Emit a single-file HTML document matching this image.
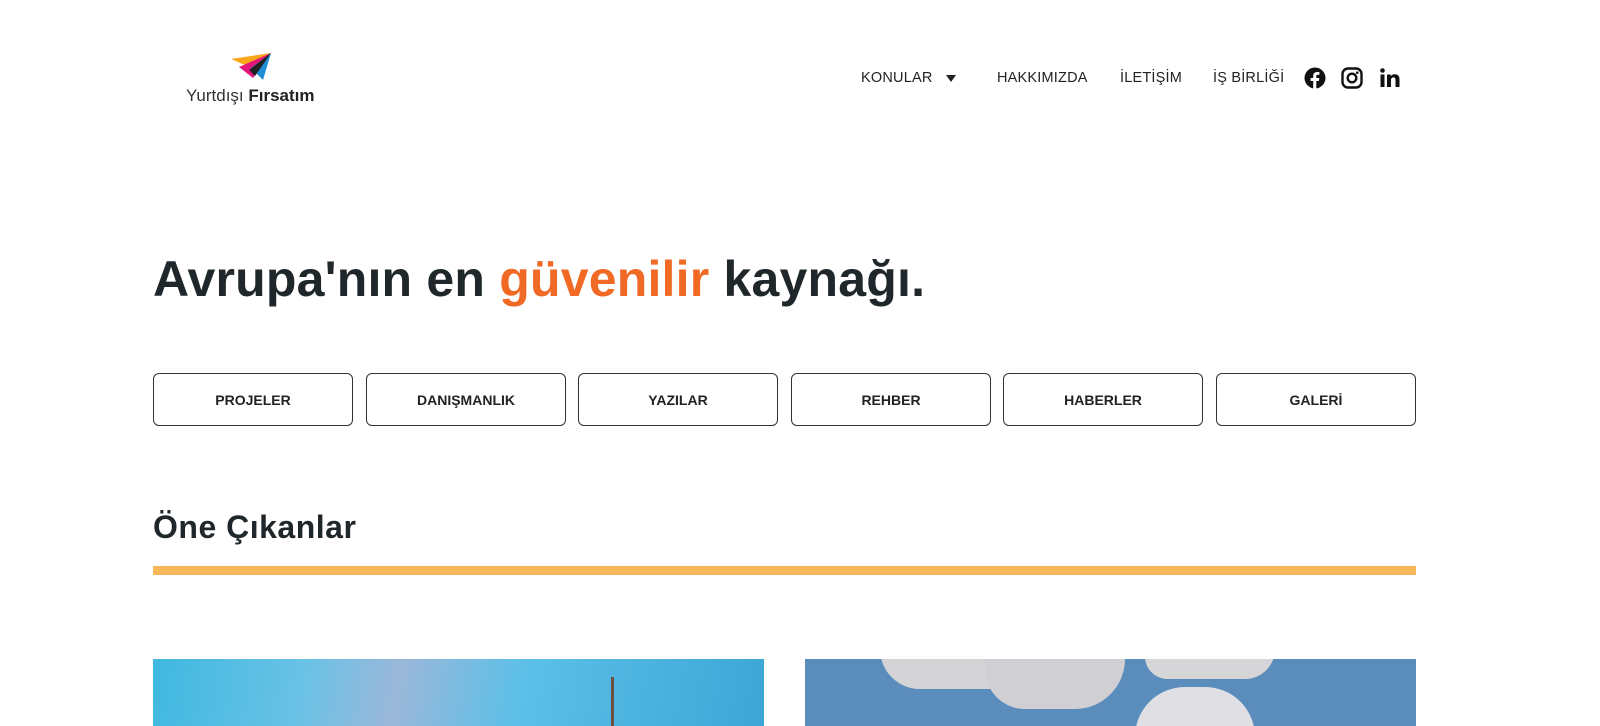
<!DOCTYPE html>
<html><head><meta charset="utf-8">
<style>
*{margin:0;padding:0;box-sizing:border-box}
body{width:1600px;height:726px;overflow:hidden;background:#fff;font-family:"Liberation Sans",sans-serif;color:#212529;position:relative}
.nav{position:absolute;top:70px;font-size:14.5px;color:#222;letter-spacing:0.2px}
h1{position:absolute;left:153px;top:250px;font-size:50px;font-weight:700;letter-spacing:0.2px;color:#1f272b}
h1 span{color:#f06a25}
.btn{position:absolute;top:373px;width:200px;height:53px;border:1px solid #333;border-radius:6px;display:flex;align-items:center;justify-content:center;font-size:14px;font-weight:700;color:#222}
h2{position:absolute;left:153px;top:509px;font-size:32px;font-weight:700;color:#1f272b;letter-spacing:0.5px}
.bar{position:absolute;left:153px;top:566px;width:1263px;height:9px;background:#f6b65a}
.img{position:absolute;top:659px;height:67px;width:611px;overflow:hidden}
</style></head><body>
<svg style="position:absolute;left:185px;top:50px" width="145" height="56" viewBox="0 0 145 56">
<polygon points="46,9 86,3 62,16" fill="#f9a61a"/>
<polygon points="54,17 86,3 68,28" fill="#e5157a"/>
<polygon points="66,18 86,3 78,30" fill="#1f8fd6"/>
<polygon points="64,20 86,3 70,26" fill="#222"/>
<text x="1" y="51" font-family="Liberation Sans" font-size="17" fill="#333">Yurtdışı <tspan font-weight="700" fill="#222">Fırsatım</tspan></text>
</svg>
<div class="nav" style="left:861px">KONULAR</div>
<div style="position:absolute;left:946px;top:75px;width:0;height:0;border-left:5px solid transparent;border-right:5px solid transparent;border-top:7px solid #222"></div>
<div class="nav" style="left:997px">HAKKIMIZDA</div>
<div class="nav" style="left:1120px">İLETİŞİM</div>
<div class="nav" style="left:1213px">İŞ BİRLİĞİ</div>
<svg style="position:absolute;left:1304px;top:67px" width="22" height="22" viewBox="0 0 22 22"><circle cx="11" cy="11" r="10.5" fill="#111"/><path d="M12.3 22V14h2.6l.4-3h-3V9.2c0-.9.3-1.5 1.5-1.5h1.6V5.1c-.3 0-1.2-.1-2.3-.1-2.3 0-3.900 1.4-3.900 4V11H6.6v3h2.6v8z" fill="#fff"/></svg>
<svg style="position:absolute;left:1341px;top:67px" width="22" height="22" viewBox="0 0 22 22"><rect x="1.5" y="1.5" width="19" height="19" rx="5.5" fill="none" stroke="#111" stroke-width="2.4"/><circle cx="11" cy="11" r="4.3" fill="none" stroke="#111" stroke-width="2.4"/><circle cx="16.3" cy="5.7" r="1.3" fill="#111"/></svg>
<svg style="position:absolute;left:1380px;top:68px" width="20" height="20" viewBox="0 0 20 20"><rect x="0.5" y="6.5" width="4" height="12.5" fill="#111"/><circle cx="2.5" cy="2.5" r="2.3" fill="#111"/><path d="M7 6.5h3.8v1.8c.6-1.1 2-2.1 4-2.1 3.6 0 4.7 2.3 4.7 5.3V19h-4v-6.6c0-1.6-.3-3-2-3s-2.5 1.2-2.5 3V19H7z" fill="#111"/></svg>
<h1>Avrupa'nın en <span>güvenilir</span> kaynağı.</h1>
<div class="btn" style="left:153px">PROJELER</div>
<div class="btn" style="left:366px">DANIŞMANLIK</div>
<div class="btn" style="left:578px">YAZILAR</div>
<div class="btn" style="left:791px">REHBER</div>
<div class="btn" style="left:1003px">HABERLER</div>
<div class="btn" style="left:1216px">GALERİ</div>
<h2>Öne Çıkanlar</h2>
<div class="bar"></div>
<div class="img" style="left:153px;background:linear-gradient(100deg,#3fb8e0 0%,#6ac2e6 25%,#9ab7d9 40%,#5cc0e8 60%,#3ca6d6 100%)">
<div style="position:absolute;left:458px;top:18px;width:3px;height:49px;background:#6b5040"></div></div>
<div class="img" style="left:805px;background:#5a8cbc">
<div style="position:absolute;left:75px;top:-10px;width:150px;height:40px;background:#d4d4d6;border-radius:0 0 40px 40px"></div>
<div style="position:absolute;left:180px;top:-10px;width:140px;height:60px;background:#d0d0d4;border-radius:0 0 50px 40px"></div>
<div style="position:absolute;left:340px;top:-10px;width:130px;height:30px;background:#d6d6d8;border-radius:0 0 40px 30px"></div>
<div style="position:absolute;left:330px;top:28px;width:120px;height:50px;background:#e0e0e4;border-radius:50px 50px 0 0"></div></div>
</body></html>
